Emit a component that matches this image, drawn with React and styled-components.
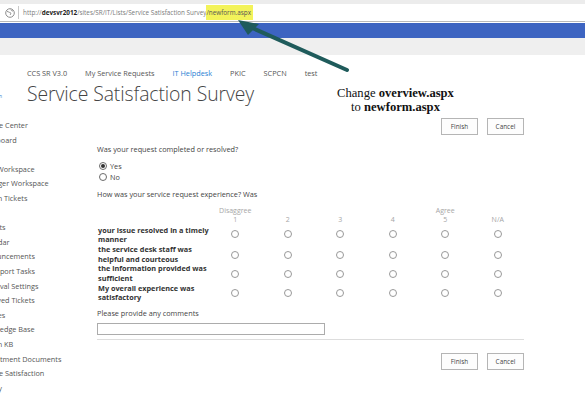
import React from "react";
import styled, { createGlobalStyle } from "styled-components";

const GlobalStyle = createGlobalStyle`
  html, body {
    margin: 0;
    padding: 0;
    background: #ffffff;
    overflow: hidden;
  }
  body {
    font-family: "Open Sans", "Noto Sans", sans-serif;
    color: #444444;
  }
`;

const Screen = styled.div`
  position: relative;
  width: 585px;
  height: 393px;
  overflow: hidden;
  background: #ffffff;
`;

const TopStrip = styled.div`
  height: 4px;
  background: #ececec;
`;

const AddressBar = styled.div`
  height: 17px;
  display: flex;
  align-items: center;
  background: #ffffff;
  border-bottom: 1px solid #b9b9b9;
  padding-left: 5px;
`;

const Globe = styled.svg`
  width: 10px;
  height: 10px;
  flex: none;
`;

const Divider = styled.span`
  width: 1px;
  height: 13px;
  margin: 0 4px 0 3px;
  background: #c8c8c8;
`;

const Url = styled.span`
  font-size: 6.35px;
  color: #7a7a7a;
  white-space: nowrap;
`;

const Host = styled.b`
  color: #222;
  font-weight: 700;
`;

const Highlight = styled.span`
  background: #f3f35a;
  color: #555;
  padding: 3px 2px 3px 0;
`;

const BlueBar = styled.div`
  height: 15px;
  margin-top: 1px;
  background: #3d64c1;
`;

const Ribbon = styled.div`
  height: 17px;
  background: #efefef;
`;

const Header = styled.div`
  display: flex;
  padding-top: 12px;
`;

const LogoStub = styled.div`
  width: 27px;
  display: flex;
  align-items: flex-end;
  padding-bottom: 7px;
  font-size: 5px;
  color: #3d7fd0;
  text-indent: -4px;
`;

const HeaderMain = styled.div`
  display: flex;
  flex-direction: column;
`;

const TopNav = styled.nav`
  display: flex;
  gap: 18px;
  font-size: 7.3px;
  line-height: 12px;
`;

const NavLink = styled.span`
  color: ${(p) => (p.$active ? "#2a7fd4" : "#555")};
`;

const Title = styled.h1`
  margin: 2px 0 0 0;
  font-family: "Open Sans", sans-serif;
  font-weight: 300;
  font-size: 19.4px;
  line-height: 25px;
  color: #444;
  letter-spacing: -0.1px;
`;

const Body = styled.div`
  display: flex;
`;

const SideNav = styled.ul`
  list-style: none;
  margin: 0 0 0 -21px;
  padding: 12px 0 0 0;
  width: 118px;
  flex: none;
  font-size: 7.3px;
  line-height: 14.6px;
  color: #555;
`;

const SideItem = styled.li`
  white-space: nowrap;
  margin-bottom: ${(p) => (p.$gap ? "14.6px" : "0")};
`;

const Form = styled.div`
  width: 427px;
  display: flex;
  flex-direction: column;
`;

const ButtonRow = styled.div`
  display: flex;
  justify-content: flex-end;
  gap: 9px;
  margin-top: ${(p) => p.$top || "0"};
`;

const Button = styled.button`
  width: 37px;
  height: 17px;
  padding: 0;
  background: #fdfdfd;
  border: 1px solid #b5b5b5;
  font-family: "Open Sans", sans-serif;
  font-size: 6.4px;
  color: #444;
`;

const Question = styled.div`
  font-size: 7.3px;
  line-height: 11px;
  color: #444;
  margin-top: ${(p) => p.$top || "0"};
`;

const RadioList = styled.div`
  display: flex;
  flex-direction: column;
  margin-top: 6px;
  margin-left: 2px;
`;

const RadioLabel = styled.label`
  display: flex;
  align-items: center;
  gap: 3px;
  font-size: 7.3px;
  line-height: 11px;
`;

const Dot = styled.span`
  width: 6px;
  height: 6px;
  border-radius: 50%;
  border: 1px solid #6b6b6b;
  background: #fff;
  display: flex;
  align-items: center;
  justify-content: center;
  flex: none;

  &::after {
    content: "";
    width: 4px;
    height: 4px;
    border-radius: 50%;
    background: ${(p) => (p.$checked ? "#333" : "transparent")};
  }
`;

const MatrixDot = styled.span`
  width: 6px;
  height: 6px;
  border-radius: 50%;
  border: 1px solid #999999;
  justify-self: center;
`;

const Matrix = styled.div`
  display: grid;
  grid-template-columns: 111px repeat(6, 52.5px);
  align-items: center;
  margin-top: 6px;
  margin-left: 1px;
`;

const ScaleTop = styled.div`
  font-size: 7px;
  line-height: 9px;
  color: #a6a6a6;
  text-align: center;
  white-space: nowrap;
  grid-column: ${(p) => p.$col};
`;

const RowLabel = styled.div`
  font-size: 7.3px;
  line-height: 9.7px;
  font-weight: 700;
  color: #333;
  white-space: nowrap;
  grid-column: 1;
  margin-top: ${(p) => (p.$first ? "2px" : "0")};
`;

const CommentInput = styled.div`
  width: 226px;
  height: 10px;
  border: 1px solid #acacac;
  margin-top: 4.5px;
`;

const Rule = styled.div`
  height: 1px;
  background: #dddddd;
  margin-top: 4px;
`;

const Annotation = styled.div`
  position: absolute;
  left: 318px;
  top: 87px;
  width: 155px;
  text-align: center;
  font-family: "Liberation Serif", "Times New Roman", serif;
  font-size: 12.6px;
  line-height: 13.5px;
  color: #111;
`;

const Arrow = styled.svg`
  position: absolute;
  left: 0;
  top: 0;
  pointer-events: none;
`;

const navLinks = ["CCS SR V3.0", "My Service Requests", "IT Helpdesk", "PKIC", "SCPCN", "test"];

const sideGroups = [
  ["Service Center", "Dashboard"],
  ["Tech Workspace", "Manager Workspace", "Search Tickets"],
  [
    "Reports",
    "Calendar",
    "Announcements",
    "IT Support Tasks",
    "Approval Settings",
    "Resolved Tickets",
    "Queues",
    "Knowledge Base",
    "Search KB",
    "Department Documents",
    "Service Satisfaction",
    "Survey",
  ],
];

const statements = [
  ["your issue resolved in a timely", "manner"],
  ["the service desk staff was", "helpful and courteous"],
  ["the information provided was", "sufficient"],
  ["My overall experience was", "satisfactory"],
];

const scale = ["1", "2", "3", "4", "5", "N/A"];

export default function App() {
  return (
    <Screen>
      <GlobalStyle />
      <TopStrip />
      <AddressBar>
        <Globe viewBox="0 0 10 10">
          <circle cx="5" cy="5" r="4.3" fill="none" stroke="#8d8d8d" strokeWidth="1" />
          <path d="M2 3.5c1.5 0 2 1 3 1s1 1.5 0 2.5M6 1.5c0 1 1 1.5 2 1.5" fill="none" stroke="#8d8d8d" strokeWidth="1" />
        </Globe>
        <Divider />
        <Url>
          http://<Host>devsvr2012</Host>/sites/SR/IT/Lists/Service Satisfaction Survey
          <Highlight>/newform.aspx</Highlight>
        </Url>
      </AddressBar>
      <BlueBar />
      <Ribbon />

      <Header>
        <LogoStub>on</LogoStub>
        <HeaderMain>
          <TopNav>
            {navLinks.map((l) => (
              <NavLink key={l} $active={l === "IT Helpdesk"}>
                {l}
              </NavLink>
            ))}
          </TopNav>
          <Title>Service Satisfaction Survey</Title>
        </HeaderMain>
      </Header>

      <Body>
        <SideNav>
          {sideGroups.map((group) =>
            group.map((item, i) => (
              <SideItem key={item} $gap={i === group.length - 1}>
                {item}
              </SideItem>
            ))
          )}
        </SideNav>

        <Form>
          <ButtonRow $top="12px">
            <Button>Finish</Button>
            <Button>Cancel</Button>
          </ButtonRow>

          <Question $top="8.5px">Was your request completed or resolved?</Question>
          <RadioList>
            <RadioLabel>
              <Dot $checked />
              Yes
            </RadioLabel>
            <RadioLabel>
              <Dot />
              No
            </RadioLabel>
          </RadioList>

          <Question $top="6px">How was your service request experience? Was</Question>

          <Matrix>
            <ScaleTop $col={2}>Disaggree</ScaleTop>
            <ScaleTop $col={6}>Agree</ScaleTop>
            {scale.map((s, i) => (
              <ScaleTop key={s} $col={i + 2}>
                {s}
              </ScaleTop>
            ))}
            {statements.map((lines, r) => (
              <React.Fragment key={r}>
                <RowLabel $first={r === 0}>
                  {lines[0]}
                  <br />
                  {lines[1]}
                </RowLabel>
                {scale.map((s) => (
                  <MatrixDot key={s} />
                ))}
              </React.Fragment>
            ))}
          </Matrix>

          <Question $top="4.5px">Please provide any comments</Question>
          <CommentInput />
          <Rule />

          <ButtonRow $top="13px">
            <Button>Finish</Button>
            <Button>Cancel</Button>
          </ButtonRow>
        </Form>
      </Body>

      <Annotation>
        Change <b>overview.aspx</b>
        <br />
        to <b>newform.aspx</b>
      </Annotation>

      <Arrow width="585" height="393" viewBox="0 0 585 393">
        <line x1="347" y1="70" x2="250" y2="27" stroke="#1f5b5b" strokeWidth="4" strokeLinecap="round" />
        <polygon points="238,20 259,24 248,35" fill="#1f5b5b" />
      </Arrow>
    </Screen>
  );
}
